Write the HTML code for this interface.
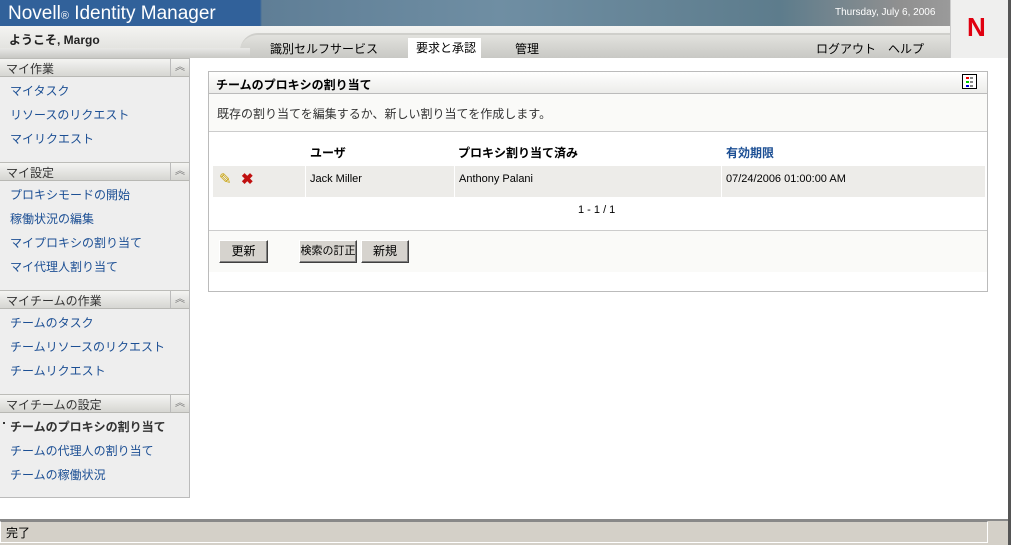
<!DOCTYPE html>
<html><head><meta charset="utf-8"><style>
*{margin:0;padding:0;box-sizing:border-box}
body{width:1011px;height:545px;overflow:hidden;background:#fff;font-family:"Liberation Sans","Noto Sans CJK JP",sans-serif;font-size:12px;color:#000;position:relative}
.a{position:absolute;white-space:nowrap}
.side{position:absolute;left:0;top:58px;width:190px;height:440px;background:#eeeeee;border-right:1px solid #bbb;border-bottom:1px solid #bbb}
.sh{position:absolute;left:0;width:189px;height:19px;background:linear-gradient(#f4f4f2,#d6d6d2);border-top:1px solid #bcbcb8;border-bottom:1px solid #b8b8b4;font-size:12px;color:#333;padding:1px 0 0 6px}
.sh span{position:absolute;right:0;top:0;width:19px;height:17px;border-left:1px solid #bbb;text-align:center;font-size:10px;color:#777;line-height:17px}
.si{position:absolute;left:10px;color:#1c4f94;font-size:12px}
.btn{position:absolute;top:240px;height:23px;background:#d6d3ce;border:1px solid #fff;border-right-color:#404040;border-bottom-color:#404040;box-shadow:inset -1px -1px #808080;font-size:12px;text-align:center;line-height:20px;white-space:nowrap;overflow:hidden}
</style></head><body>
<div class="a" style="left:0;top:0;width:950px;height:26px;background:linear-gradient(90deg,#31619a 0,#31619a 260px,#5f7e96 262px,#6f8ea3 500px,#5d7c8c 780px,#909090 900px,#9a9a9a 950px)"></div>
<div class="a" style="left:8px;top:3px;color:#fff;font-size:19px">Novell<span style="font-size:11px">®</span> Identity Manager</div>
<div class="a" style="left:835px;top:7px;color:#fff;font-size:10px">Thursday, July 6, 2006</div>
<div class="a" style="left:950px;top:0;width:58px;height:58px;background:#efefee;border-left:1px solid #ccc"></div>
<div class="a" style="left:967px;top:12px;color:#e00010;font-size:26px;font-weight:bold">N</div>
<div class="a" style="left:0;top:26px;width:950px;height:32px;background:linear-gradient(#f4f4f2,#dcdcd8)"></div>
<div class="a" style="left:240px;top:33px;width:710px;height:25px;background:linear-gradient(#e2e2de,#c8c8c4);border-top:2px solid #cfcfcb;border-radius:18px 0 0 0"></div>
<div class="a" style="left:0;top:48px;width:250px;height:10px;background:linear-gradient(#e8e8e6,#c8c8c4)"></div>
<div class="a" style="left:9px;top:31px;font-size:12px;font-weight:bold;color:#222">ようこそ, Margo</div>
<div class="a" style="left:270px;top:40px;font-size:12px">識別セルフサービス</div>
<div class="a" style="left:408px;top:38px;width:73px;height:20px;background:#fff"></div>
<div class="a" style="left:416px;top:39px;font-size:12px">要求と承認</div>
<div class="a" style="left:515px;top:40px;font-size:12px">管理</div>
<div class="a" style="left:816px;top:40px;font-size:12px">ログアウト</div>
<div class="a" style="left:888px;top:40px;font-size:12px">ヘルプ</div>
<div class="side"></div>
<div class="sh" style="top:58px">マイ作業<span>︽</span></div>
<div class="si" style="top:82px">マイタスク</div>
<div class="si" style="top:106px">リソースのリクエスト</div>
<div class="si" style="top:130px">マイリクエスト</div>
<div class="sh" style="top:162px">マイ設定<span>︽</span></div>
<div class="si" style="top:186px">プロキシモードの開始</div>
<div class="si" style="top:210px">稼働状況の編集</div>
<div class="si" style="top:234px">マイプロキシの割り当て</div>
<div class="si" style="top:258px">マイ代理人割り当て</div>
<div class="sh" style="top:290px">マイチームの作業<span>︽</span></div>
<div class="si" style="top:314px">チームのタスク</div>
<div class="si" style="top:338px">チームリソースのリクエスト</div>
<div class="si" style="top:362px">チームリクエスト</div>
<div class="sh" style="top:394px">マイチームの設定<span>︽</span></div>
<div class="a" style="left:3px;top:422px;width:2px;height:2px;background:#333"></div>
<div class="si" style="top:418px;color:#333;font-weight:bold">チームのプロキシの割り当て</div>
<div class="si" style="top:442px">チームの代理人の割り当て</div>
<div class="si" style="top:466px">チームの稼働状況</div>
<div class="a" style="left:208px;top:71px;width:780px;height:221px;border:1px solid #bbb;background:#fafaf8"></div>
<div class="a" style="left:209px;top:72px;width:778px;height:22px;background:linear-gradient(#fff,#ececea);border-bottom:1px solid #bbb"></div>
<div class="a" style="left:216px;top:76px;font-size:12px;font-weight:bold">チームのプロキシの割り当て</div>
<div class="a" style="left:962px;top:74px;width:15px;height:15px;border:1px solid #000;background:#fff">
<div class="a" style="left:3px;top:2px;width:3px;height:2px;background:#e00"></div><div class="a" style="left:7px;top:2px;width:3px;height:2px;background:#888"></div>
<div class="a" style="left:3px;top:6px;width:3px;height:2px;background:#0c0"></div><div class="a" style="left:7px;top:6px;width:3px;height:2px;background:#888"></div>
<div class="a" style="left:3px;top:10px;width:3px;height:2px;background:#00d"></div><div class="a" style="left:7px;top:10px;width:3px;height:2px;background:#888"></div></div>
<div class="a" style="left:217px;top:105px;font-size:12px;color:#333">既存の割り当てを編集するか、新しい割り当てを作成します。</div>
<div class="a" style="left:209px;top:131px;width:778px;height:100px;background:#fff;border-top:1px solid #ccc;border-bottom:1px solid #ccc"></div>
<div class="a" style="left:310px;top:144px;font-weight:bold">ユーザ</div>
<div class="a" style="left:458px;top:144px;font-weight:bold">プロキシ割り当て済み</div>
<div class="a" style="left:726px;top:144px;font-weight:bold;color:#1c4f94">有効期限</div>
<div class="a" style="left:213px;top:166px;width:772px;height:31px;background:#edece9"></div>
<div class="a" style="left:305px;top:166px;width:1px;height:31px;background:#fff"></div>
<div class="a" style="left:454px;top:166px;width:1px;height:31px;background:#fff"></div>
<div class="a" style="left:721px;top:166px;width:1px;height:31px;background:#fff"></div>
<div class="a" style="left:219px;top:170px;font-size:15px;color:#c8a000">✎</div>
<div class="a" style="left:241px;top:170px;font-size:15px;color:#c01010;font-weight:bold">✖</div>
<div class="a" style="left:310px;top:173px;font-size:11px">Jack Miller</div>
<div class="a" style="left:459px;top:173px;font-size:11px">Anthony Palani</div>
<div class="a" style="left:726px;top:173px;font-size:11px">07/24/2006 01:00:00 AM</div>
<div class="a" style="left:578px;top:204px;font-size:11px">1 - 1 / 1</div>
<div class="a" style="left:209px;top:272px;width:778px;height:19px;background:#fff"></div>
<div class="btn" style="left:219px;width:49px">更新</div>
<div class="btn" style="left:299px;width:58px;font-size:11px">検索の訂正</div>
<div class="btn" style="left:361px;width:48px">新規</div>
<div class="a" style="left:1008px;top:0;width:3px;height:545px;background:#555"></div>
<div class="a" style="left:0;top:519px;width:1008px;height:26px;background:#d4d0c8;border-top:2px solid #888"></div>
<div class="a" style="left:0;top:521px;width:988px;height:22px;border:1px solid #fff;border-top-color:#888"></div>
<div class="a" style="left:6px;top:524px;font-size:12px">完了</div>
</body></html>
